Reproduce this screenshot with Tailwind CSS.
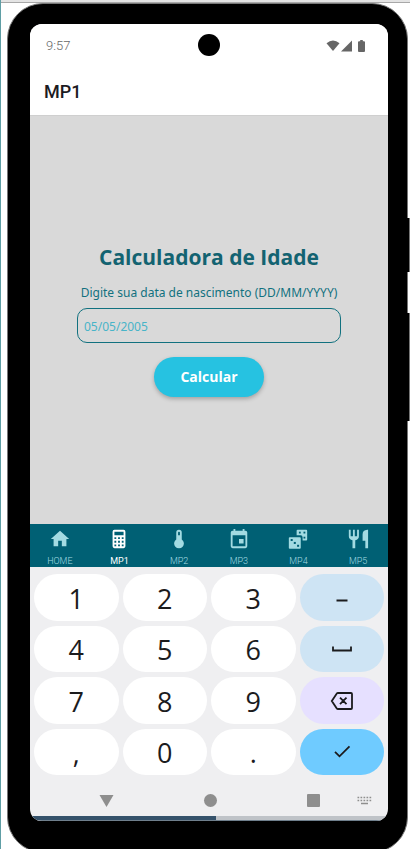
<!DOCTYPE html>
<html lang="pt-BR">
<head>
<meta charset="utf-8">
<meta name="viewport" content="width=device-width, initial-scale=1">
<title>MP1</title>
<script src="https://cdn.jsdelivr.net/npm/@tailwindcss/browser@4"></script>
</head>
<body class="flex h-screen flex-col overflow-hidden border-l border-[#5f9ea5] bg-white font-['Roboto',sans-serif]">
<div class="h-[3px] shrink-0 border-b border-[#a8a8a8] bg-[#e4e4e4]"></div>
<div class="relative -mb-1 ml-[6px] mr-[2px] flex min-h-0 flex-1 flex-col rounded-[36px] border border-[#777] bg-black pt-[20px] pr-[19px] pb-[31px] pl-[22px]">
  <div class="absolute top-[214px] -right-[3px] h-[54px] w-[3px] border-r border-[#777] bg-black"></div>
  <div class="absolute top-[309px] -right-[3px] h-[108px] w-[3px] border-r border-[#777] bg-black"></div>
  <div class="flex min-h-0 flex-1 flex-col overflow-hidden rounded-xl bg-[#efeff1]">
    <header class="bg-white">
      <div class="relative flex h-[43px] items-center justify-between pr-[23px] pl-4 text-[#666]">
        <span class="text-[13px] font-light">9:57</span>
        <div class="absolute top-[10px] left-1/2 size-[22px] -translate-x-1/2 rounded-full bg-black"></div>
        <div class="flex items-center">
          <svg class="h-3 w-[14px]" viewBox="0 0 14 12" fill="currentColor"><path d="M0.5 3.2Q7-2 13.5 3.2L7 11Z"/></svg>
          <svg class="ml-px h-3 w-[11px]" viewBox="0 0 11 12" fill="currentColor"><path d="M11 .5V11.500H0Z"/></svg>
          <svg class="ml-[6px] h-3 w-[7px]" viewBox="0 0 7 12" fill="currentColor"><path d="M2.200 0h2.600v1.200H6q1 0 1 1V11q0 1-1 1H1q-1 0-1-1V2.200q0-1 1-1h1.200Z"/></svg>
        </div>
      </div>
      <h1 class="flex h-12 items-center px-[14px] text-[18px] font-medium text-[#1c1b1f]">MP1</h1>
    </header>
    <main class="flex min-h-0 flex-1 flex-col items-center justify-center border-t border-[#cfcfcf] bg-[#d9d9d9] px-[47px] pb-[2px] font-['Open_Sans',sans-serif]">
      <h2 class="text-[21px] leading-[30px] font-bold whitespace-nowrap text-[#136371]">Calculadora de Idade</h2>
      <label for="birth" class="mt-3 font-['Noto_Sans',sans-serif] text-[12px] leading-[18px] whitespace-nowrap text-[#11717f]">Digite sua data de nascimento (DD/MM/YYYY)</label>
      <input id="birth" type="text" placeholder="05/05/2005" class="mt-[6px] h-[35px] w-full rounded-[10px] border border-[#11717f] bg-transparent px-[6px] pt-[2px] font-['Noto_Sans',sans-serif] text-[12px] text-[#11717f] outline-none placeholder:text-[#48b4c8]">
      <button type="button" class="mt-[14px] h-10 w-[110px] rounded-full bg-[#26c2e1] text-[14px] font-bold text-white shadow-[0_2px_4px_rgba(0,0,0,0.25)]">Calcular</button>
    </main>
    <nav class="grid h-[43px] grid-cols-6 bg-[#006074] text-[9px] leading-[10px] text-[#a3dbe2]">
      <a href="#" class="flex flex-col items-center gap-[6px] pt-1"><svg class="size-[22px]" viewBox="0 0 24 24" fill="currentColor"><path d="M10 20v-6h4v6h5v-8h3L12 3 2 12h3v8z"/></svg><span class="font-light">HOME</span></a>
      <a href="#" class="flex flex-col items-center gap-[6px] pt-1 text-white"><svg class="size-[22px]" viewBox="0 0 24 24" fill="currentColor"><path fill-rule="evenodd" d="M7 2h10a2 2 0 0 1 2 2v16a2 2 0 0 1-2 2H7a2 2 0 0 1-2-2V4a2 2 0 0 1 2-2m0 2v4h10V4zm0 6v2h2v-2zm4 0v2h2v-2zm4 0v2h2v-2zm-8 4v2h2v-2zm4 0v2h2v-2zm4 0v2h2v-2zm-8 4v2h2v-2zm4 0v2h2v-2zm4 0v2h2v-2z"/></svg><span>MP1</span></a>
      <a href="#" class="flex flex-col items-center gap-[6px] pt-1"><svg class="size-[22px]" viewBox="0 0 24 24" fill="currentColor"><path fill-rule="evenodd" d="M15 12.500V5a3 3 0 0 0-6 0v7.500a5.300 5.300 0 1 0 6 0M11 8V5a1 1 0 0 1 2 0v3z"/></svg><span class="font-light">MP2</span></a>
      <a href="#" class="flex flex-col items-center gap-[6px] pt-1"><svg class="size-[22px]" viewBox="0 0 24 24" fill="currentColor"><path fill-rule="evenodd" d="M6 1h2v2h8V1h2v2h1a2 2 0 0 1 2 2v15a2 2 0 0 1-2 2H5a2 2 0 0 1-2-2V5a2 2 0 0 1 2-2h1zM5 8v12h14V8zm7 4h5v5h-5z"/></svg><span class="font-light">MP3</span></a>
      <a href="#" class="flex flex-col items-center gap-[6px] pt-1"><svg class="size-[22px]" viewBox="0 0 24 24"><g fill="currentColor"><path d="M11.500 2h9.500q1 0 1 1v9.500q0 1-1 1H17V10q0-2-2-2h-4.500V3q0-1 1-1z"/><rect x="2" y="10" width="13" height="12.500" rx="1"/></g><g fill="#006074"><rect x="13" y="4" width="2" height="2"/><rect x="18" y="4" width="2" height="2"/><rect x="18" y="9.500" width="2" height="2"/><rect x="4" y="12" width="2.200" height="2.200"/><rect x="7.400" y="15.200" width="2.200" height="2.200"/><rect x="11" y="18.300" width="2.200" height="2.200"/></g></svg><span class="font-light">MP4</span></a>
      <a href="#" class="flex flex-col items-center gap-[6px] pt-1"><svg class="size-[22px]" viewBox="0 0 24 24" fill="currentColor"><path d="M2 2h2v7h2.500V2h2v7H11V2h2v7q0 3.500-4 4.300V22H6v-8.700Q2 12.500 2 9zM17 7q0-4.500 5-5h1v20h-3v-8h-3z"/></svg><span class="font-light">MP5</span></a>
    </nav>
    <div class="px-1 pt-[7px]">
      <div class="grid h-[201px] grid-cols-4 grid-rows-4 gap-x-1 gap-y-[5px] font-['Open_Sans',sans-serif] text-[27px] text-[#1b1b1d] *:flex *:items-center *:justify-center *:rounded-full *:pt-[3px]">
        <button type="button" class="bg-white">1</button>
        <button type="button" class="bg-white">2</button>
        <button type="button" class="bg-white">3</button>
        <button type="button" class="bg-[#cee4f4]" aria-label="Hífen"><svg class="h-6 w-6" viewBox="0 0 24 24" fill="currentColor"><path d="M6.500 12.500h11v2h-11z"/></svg></button>
        <button type="button" class="bg-white">4</button>
        <button type="button" class="bg-white">5</button>
        <button type="button" class="bg-white">6</button>
        <button type="button" class="bg-[#cee4f4]" aria-label="Espaço"><svg class="h-6 w-6" viewBox="0 0 24 24" fill="none" stroke="currentColor" stroke-width="1.800"><path d="M3 8.500v4h18v-4"/></svg></button>
        <button type="button" class="bg-white">7</button>
        <button type="button" class="bg-white">8</button>
        <button type="button" class="bg-white">9</button>
        <button type="button" class="bg-[#e6e0ff]" aria-label="Apagar"><svg class="h-6 w-6" viewBox="0 0 24 24" fill="none" stroke="currentColor" stroke-width="1.800"><path d="M8 3h13q1 0 1 1v14q0 1-1 1H8q-.8 0-1.200-.6L1.800 11l5-7.400Q7.200 3 8 3zM10 7.700l6.500 6.500m0-6.500l-6.500 6.500"/></svg></button>
        <button type="button" class="bg-white">,</button>
        <button type="button" class="bg-white">0</button>
        <button type="button" class="bg-white">.</button>
        <button type="button" class="bg-[#6fcbff]" aria-label="Confirmar"><svg class="h-6 w-6" viewBox="0 0 24 24" fill="none" stroke="currentColor" stroke-width="1.800"><path d="M5 10.800l4.500 4.500L19.500 5.300"/></svg></button>
      </div>
    </div>
    <div class="relative flex h-[41px] items-center justify-center gap-[90px] pt-[10px] text-[#8e8e8e]">
      <button type="button" aria-label="Voltar"><svg class="h-[14px] w-[15px]" viewBox="0 0 15 14" fill="currentColor"><path d="M.5 1h14L7.500 13z"/></svg></button>
      <button type="button" aria-label="Início" class="size-[13px] rounded-full bg-[#8e8e8e]"></button>
      <button type="button" aria-label="Recentes" class="size-[13px] rounded-[1px] bg-[#8e8e8e]"></button>
      <button type="button" aria-label="Teclado" class="absolute right-4 bottom-[11px]"><svg class="h-[9px] w-[15px]" viewBox="0 0 15 9" fill="none" stroke="currentColor" stroke-width="1.500"><path stroke-dasharray="1.700 1.300" d="M.5 1.500h14M.5 4.500h14"/><path d="M4 7.500h7"/></svg></button>
    </div>
    <div class="h-[5px] shrink-0 border-b border-[#6f7f8c] bg-[#bfc3c8]"><div class="h-full w-[52%] bg-[#35526b]"></div></div>
  </div>
</div>
</body>
</html>
